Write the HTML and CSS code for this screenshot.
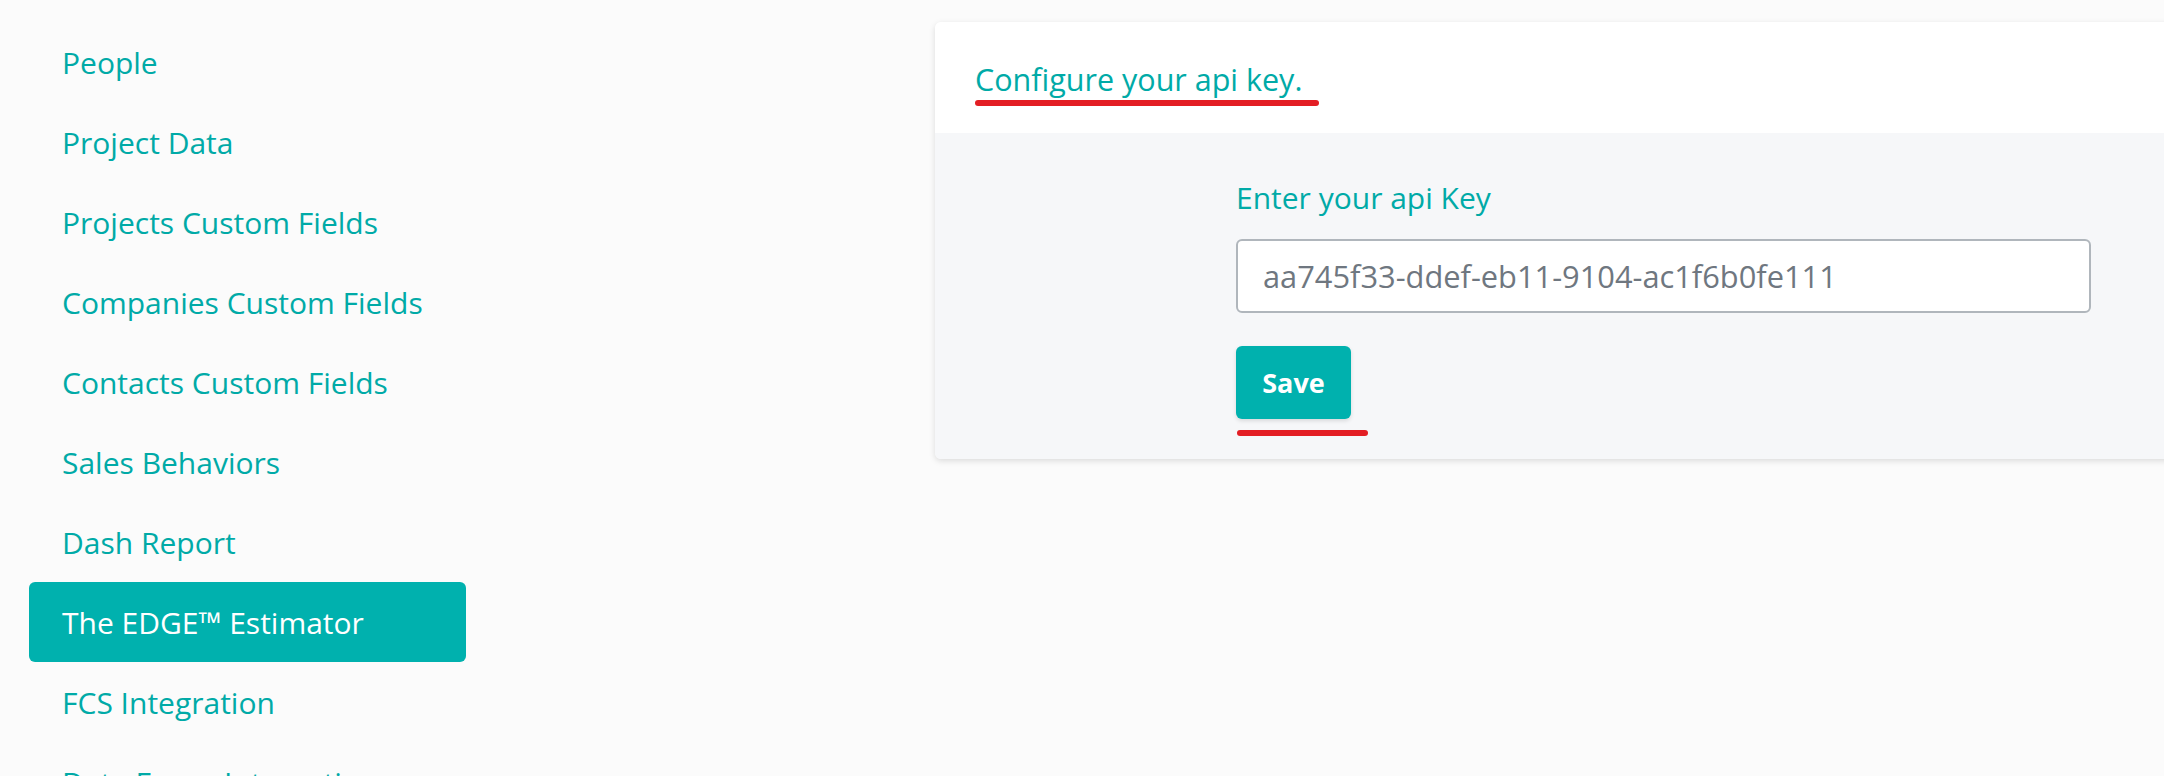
FILE: index.html
```html
<!DOCTYPE html>
<html lang="en">
<head>
  <meta charset="UTF-8" />
  <meta name="viewport" content="width=device-width, initial-scale=1.0"/>
  <title>Settings - API Key</title>
  <link rel="stylesheet" href="styles.css">
</head>

<body>
  <div class="layout">
    <nav class="sidebar">
      <a class="nav-item" href="#">People</a>
      <a class="nav-item" href="#">Project Data</a>
      <a class="nav-item" href="#">Projects Custom Fields</a>
      <a class="nav-item" href="#">Companies Custom Fields</a>
      <a class="nav-item" href="#">Contacts Custom Fields</a>
      <a class="nav-item" href="#">Sales Behaviors</a>
      <a class="nav-item" href="#">Dash Report</a>
      <a class="nav-item active" href="#">The EDGE™ Estimator</a>
      <a class="nav-item" href="#">FCS Integration</a>
      <a class="nav-item" href="#">Data Focus Integration</a>
    </nav>

    <main class="main">
      <div class="card">
        <div class="card-header">
          <h2 class="card-title">Configure your api key.</h2>
          <span class="mark mark-title"></span>
        </div>
        <div class="card-body">
          <form class="key-form">
            <label class="key-label" for="apiKey">Enter your api Key</label>
            <input class="key-input" id="apiKey" type="text" value="aa745f33-ddef-eb11-9104-ac1f6b0fe111">
            <button class="btn-save" type="button">Save</button>
            <span class="mark mark-save"></span>
          </form>
        </div>
      </div>
    </main>
  </div>
</body>
</html>
```

FILE: styles.css
```css
body {
  margin: 0;
  background: #fbfbfb;
  font-family: 'Open Sans', 'Noto Sans', sans-serif;
  color: #00aaa7;
  height: 776px;
  overflow: hidden;
}

.layout {
  display: flex;
  padding-top: 22px;
}

.sidebar {
  width: 437px;
  margin-left: 29px;
  flex-shrink: 0;
}

.nav-item {
  display: block;
  height: 80px;
  line-height: 82px;
  padding-left: 33px;
  border-radius: 6px;
  color: #00aaa7;
  font-size: 30px;
  text-decoration: none;
  white-space: nowrap;
}

.nav-item.active {
  background-color: #00b1ae;
  color: #fff;
}

.main {
  flex: 1;
  margin-left: 469px;
  margin-right: -40px;
}

.card {
  border-radius: 6px;
  overflow: hidden;
  box-shadow: 0 2px 6px rgba(0,0,0,0.13);
}

.card-header {
  background: #fff;
  height: 111px;
  padding: 37px 0 0 40px;
  box-sizing: border-box;
}

.card-title {
  margin: 0;
  font-size: 30.5px;
  font-weight: 400;
  line-height: 40px;
  color: #00aaa7;
}

/* red annotation strokes */
.mark {
  display: block;
  height: 6px;
  background: #e31e24;
  border-radius: 3px;
}

.mark-title {
  width: 344px;
  margin-top: 1px;
}

.card-body {
  background: #f6f7f9;
  height: 326px;
  padding: 45px 0 0 301px;
  box-sizing: border-box;
}

.key-form {
  width: 855px;
}

.key-label {
  display: block;
  font-size: 30px;
  line-height: 40px;
  color: #00aaa7;
}

.key-input {
  display: block;
  width: 100%;
  height: 74px;
  margin-top: 21px;
  padding: 0 25px;
  font-family: inherit;
  font-size: 30.8px;
  color: #6f7780;
  background: #fff;
  border: 2px solid #b0b6bc;
  border-radius: 6px;
  box-sizing: border-box;
}

.btn-save {
  display: block;
  margin-top: 33px;
  width: 115px;
  height: 73px;
  font-family: inherit;
  font-size: 27px;
  font-weight: 700;
  color: #fff;
  background-color: #00b1ae;
  border: none;
  border-radius: 6px;
  box-shadow: 0 2px 4px rgba(0,0,0,0.12);
}

.mark-save {
  width: 131px;
  margin-top: 11px;
  margin-left: 1px;
}
```
